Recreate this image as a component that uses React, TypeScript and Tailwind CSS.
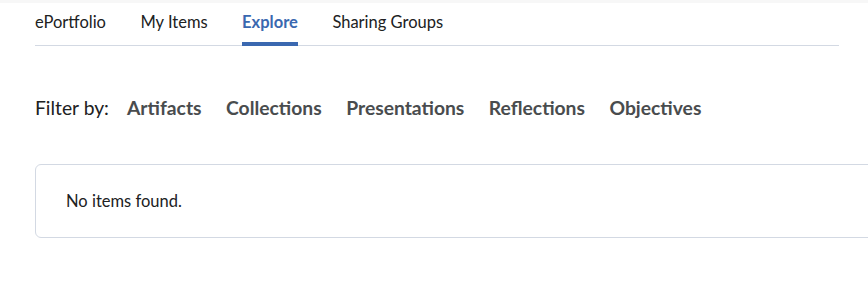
import React from "react";

const tabs = ["ePortfolio", "My Items", "Explore", "Sharing Groups"];
const filters = ["Artifacts", "Collections", "Presentations", "Reflections", "Objectives"];

export default function App() {
  return (
    <div className="w-[868px] h-[299px] bg-white overflow-hidden font-['Lato','Noto_Sans',sans-serif] text-[#202122]">
      <div className="h-[3px] bg-[#f7f7f7]" />

      {/* Tabs */}
      <div className="ml-[35px] mr-[29px] flex gap-[34.5px] border-b border-[#d3d9e3]">
        {tabs.map((t) => {
          const active = t === "Explore";
          return (
            <div
              key={t}
              className={
                active
                  ? "pt-[8px] pb-[8px] text-[16.5px] font-bold text-[#3a68b0] border-b-[4px] border-[#3a68b0] -mb-px leading-[22px]"
                  : "pt-[8px] pb-[12px] text-[16.5px] text-[#202122] leading-[22px]"
              }
            >
              {t}
            </div>
          );
        })}
      </div>

      {/* Filter row */}
      <div className="ml-[35px] mt-[50px] flex items-center text-[19.3px] leading-[24px]">
        <span className="text-[#202122] mr-[18px]">Filter by:</span>
        <div className="flex gap-[24.5px]">
          {filters.map((f) => (
            <span key={f} className="font-bold text-[#494c4e]">
              {f}
            </span>
          ))}
        </div>
      </div>

      {/* Results */}
      <div className="ml-[35px] -mr-[10px] mt-[44px] h-[74px] border border-[#d3d9e3] rounded-[6px] flex items-center pl-[30px] text-[16.5px] text-[#202122]">
        No items found.
      </div>
    </div>
  );
}
